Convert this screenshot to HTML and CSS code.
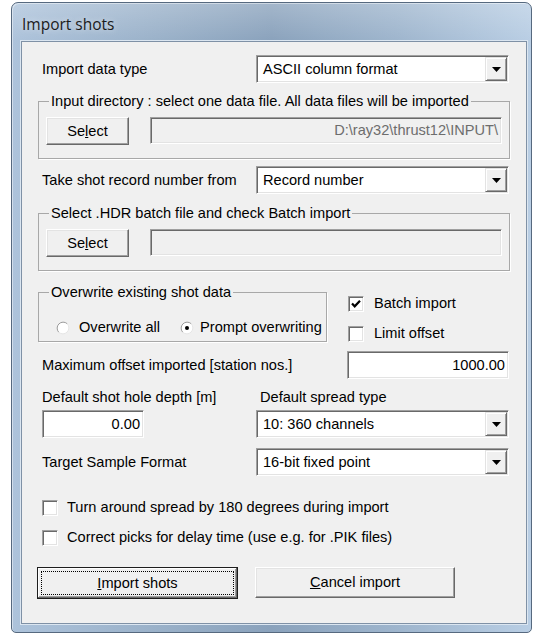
FILE: index.html
```html
<!DOCTYPE html>
<html lang="en">
<head>
<meta charset="utf-8">
<title>Import shots</title>
<link rel="stylesheet" href="styles.css">
</head>
<body>
<div class="window">
  <div class="titlebar"><span class="title">Import shots</span></div>
  <div class="client">

    <div class="row combo-row">
      <span class="lbl">Import data type</span>
      <div class="combo"><span class="combo-text">ASCII column format</span><span class="drop"><svg width="9" height="5" viewBox="0 0 9 5"><path d="M0 0H9L4.5 5Z" fill="#000"/></svg></span></div>
    </div>

    <fieldset class="group g1">
      <legend>Input directory : select one data file. All data files will be imported</legend>
      <div class="pick">
        <button class="btn select-btn">Se<u>l</u>ect</button>
        <div class="field disabled">D:\ray32\thrust12\INPUT\</div>
      </div>
    </fieldset>

    <div class="row combo-row take-row">
      <span class="lbl">Take shot record number from</span>
      <div class="combo"><span class="combo-text">Record number</span><span class="drop"><svg width="9" height="5" viewBox="0 0 9 5"><path d="M0 0H9L4.5 5Z" fill="#000"/></svg></span></div>
    </div>

    <fieldset class="group g2">
      <legend>Select .HDR batch file and check Batch import</legend>
      <div class="pick">
        <button class="btn select-btn">Se<u>l</u>ect</button>
        <div class="field disabled"></div>
      </div>
    </fieldset>

    <div class="overwrite-section">
      <fieldset class="group g3">
        <legend>Overwrite existing shot data</legend>
        <div class="radios">
          <label class="radio"><svg class="radio-dot" width="14" height="14" viewBox="0 0 14 14"><circle cx="7" cy="7" r="6" fill="#fff"/><path d="M2.76 11.24A6 6 0 0 1 11.24 2.76" fill="none" stroke="#9a9a9a" stroke-width="1"/><path d="M11.24 2.76A6 6 0 0 1 2.76 11.24" fill="none" stroke="#e6e6e6" stroke-width="1"/></svg><span>Overwrite all</span></label>
          <label class="radio second"><svg class="radio-dot" width="14" height="14" viewBox="0 0 14 14"><circle cx="7" cy="7" r="6" fill="#fff"/><path d="M2.76 11.24A6 6 0 0 1 11.24 2.76" fill="none" stroke="#9a9a9a" stroke-width="1"/><path d="M11.24 2.76A6 6 0 0 1 2.76 11.24" fill="none" stroke="#e6e6e6" stroke-width="1"/><circle cx="7" cy="7" r="2" fill="#000"/></svg><span>Prompt overwriting</span></label>
        </div>
      </fieldset>
      <div class="side-checks">
        <label class="check"><span class="box"><svg width="12" height="12" viewBox="0 0 12 12"><path d="M2 5.5L4.7 8.3L10 2.8" fill="none" stroke="#000" stroke-width="2.2"/></svg></span><span>Batch import</span></label>
        <label class="check second"><span class="box"></span><span>Limit offset</span></label>
      </div>
    </div>

    <div class="row max-row">
      <span class="lbl">Maximum offset imported [station nos.]</span>
      <div class="field value offset-field">1000.00</div>
    </div>

    <div class="pair labels-pair">
      <span class="lbl">Default shot hole depth [m]</span>
      <span class="lbl">Default spread type</span>
    </div>
    <div class="pair inputs-pair">
      <div class="field value depth-field">0.00</div>
      <div class="combo"><span class="combo-text">10: 360 channels</span><span class="drop"><svg width="9" height="5" viewBox="0 0 9 5"><path d="M0 0H9L4.5 5Z" fill="#000"/></svg></span></div>
    </div>

    <div class="row combo-row target-row">
      <span class="lbl">Target Sample Format</span>
      <div class="combo"><span class="combo-text">16-bit fixed point</span><span class="drop"><svg width="9" height="5" viewBox="0 0 9 5"><path d="M0 0H9L4.5 5Z" fill="#000"/></svg></span></div>
    </div>

    <label class="check wide first-wide"><span class="box"></span><span>Turn around spread by 180 degrees during import</span></label>
    <label class="check wide"><span class="box"></span><span>Correct picks for delay time (use e.g. for .PIK files)</span></label>

    <div class="actions">
      <button class="btn action default"><span class="focus"><u>I</u>mport shots</span></button>
      <button class="btn action"><u>C</u>ancel import</button>
    </div>

  </div>
</div>
</body>
</html>
```
FILE: styles.css
```css
* { box-sizing: border-box; }

html, body {
  margin: 0;
  padding: 0;
  background: #fff;
}

body {
  font-family: "Liberation Sans", Arial, sans-serif;
  font-size: 14.6px;
  line-height: 17px;
  color: #000;
}

/* Aero window frame */
.window {
  margin: 2px 0 0 11px;
  width: 521px;
  height: 631px;
  border: 1px solid #56697f;
  border-radius: 7px 7px 5px 5px;
  background:
    linear-gradient(180deg, rgba(255,255,255,0.22) 0, rgba(255,255,255,0) 38px),
    linear-gradient(90deg, #adc3db 0%, #9ab1c9 28%, #8aa2bc 50%, #9eb5cd 74%, #b9cee4 100%);
  padding: 0 4px 8px 9px;
  display: flex;
  flex-direction: column;
  box-shadow: inset 1px 1px 0 rgba(255,255,255,0.45);
}

.titlebar {
  height: 38px;
  display: flex;
  align-items: center;
  padding: 5px 0 0 1px;
}

.title {
  font-family: "Open Sans", "Noto Sans", sans-serif;
  font-size: 15.5px;
  color: #1b1b1b;
  text-shadow: 0 0 6px rgba(255,255,255,0.6);
}

.client {
  flex: 1;
  background: #f0f0f0;
  border: 1px solid #7f91a6;
  box-shadow: 0 0 0 1px #dbe6f1;
  padding: 13px 16px 0 16px;
  display: flex;
  flex-direction: column;
}

/* generic rows */
.row {
  display: flex;
  align-items: center;
}

.lbl {
  padding-left: 4px;
}

/* classic sunken combobox */
.combo {
  display: flex;
  align-items: stretch;
  margin-left: auto;
  margin-right: 1px;
  width: 253px;
  height: 28px;
  background: #fff;
  border: 1px solid;
  border-color: #a0a0a0 #fff #fff #a0a0a0;
  box-shadow: inset 1px 1px 0 #696969, inset -1px -1px 0 #e3e3e3;
  padding: 1px;
}

.combo-text {
  flex: 1;
  display: flex;
  align-items: center;
  padding-left: 5px;
}

.drop {
  width: 22px;
  display: flex;
  align-items: center;
  justify-content: center;
  background: #f0f0f0;
  border: 1px solid;
  border-color: #e3e3e3 #696969 #696969 #e3e3e3;
  box-shadow: inset 1px 1px 0 #fff, inset -1px -1px 0 #a0a0a0;
}

/* etched group boxes */
.group {
  margin: 0;
  min-width: 0;
  border: 1px solid #a8a8a8;
  box-shadow: 1px 1px 0 #fff;
}

.group legend {
  padding: 0 2px;
  line-height: 17px;
}

.g1, .g2 {
  padding: 7px 7px 13px 7px;
}

.g1 legend, .g2 legend {
  margin-left: 3px;
}

.g1 { margin-top: 10px; }
.g2 { margin-top: 11px; }

.pick {
  display: flex;
  align-items: flex-start;
  gap: 21px;
}

/* classic raised push button */
.btn {
  font: inherit;
  color: #000;
  background: #f0f0f0;
  border: 1px solid;
  border-color: #fff #696969 #696969 #fff;
  box-shadow: inset -1px -1px 0 #a0a0a0, inset 1px 1px 0 #e3e3e3;
  padding: 0;
  margin: 0;
}

.select-btn {
  width: 83px;
  height: 28px;
}

/* sunken edit field */
.field {
  height: 27px;
  border: 1px solid;
  border-color: #a0a0a0 #fff #fff #a0a0a0;
  box-shadow: inset 1px 1px 0 #696969, inset -1px -1px 0 #e3e3e3;
  display: flex;
  align-items: center;
  justify-content: flex-end;
  padding: 0 3px;
  background: #fff;
}

.field.disabled {
  flex: 1;
  background: #f0f0f0;
  color: #6d6d6d;
}

.take-row { margin-top: 7px; }

/* overwrite group and side checkboxes */
.overwrite-section {
  display: flex;
  margin-top: 13px;
}

.g3 {
  width: 289px;
  padding: 18px 0 5px 10px;
}

.radios {
  display: flex;
  align-items: center;
  margin-left: 7px;
}

.radio {
  display: flex;
  align-items: center;
  gap: 9px;
}

.radio.second {
  margin-left: 20px;
  gap: 6px;
}

.radio-dot { display: block; }

.side-checks {
  display: flex;
  flex-direction: column;
  margin-left: 21px;
  padding-top: 11px;
}

.check {
  display: flex;
  align-items: center;
  gap: 10px;
  height: 17px;
}

.side-checks .check.second { margin-top: 13px; }

.box {
  width: 16px;
  height: 16px;
  background: #fff;
  border: 1px solid;
  border-color: #a0a0a0 #fff #fff #a0a0a0;
  box-shadow: inset 1px 1px 0 #696969, inset -1px -1px 0 #e3e3e3;
  display: flex;
  align-items: center;
  justify-content: center;
}

.max-row { margin-top: 9px; }

.offset-field {
  margin-left: auto;
  margin-right: 1px;
  width: 162px;
  height: 28px;
}

.pair {
  display: grid;
  grid-template-columns: 218px 1fr;
  align-items: center;
}

.labels-pair { margin-top: 10px; }

.inputs-pair { margin-top: 4px; }

.depth-field {
  margin-left: 4px;
  width: 102px;
  height: 28px;
}

.inputs-pair .combo {
  margin-left: 0;
}

.target-row { margin-top: 10px; }

.check.wide {
  margin-left: 4px;
  gap: 9px;
  margin-top: 13px;
}

.check.wide.first-wide { margin-top: 23px; }

.actions {
  display: flex;
  align-items: flex-start;
  gap: 17px;
  margin-top: 21px;
}

.action {
  width: 200px;
  height: 31px;
}

.action.default {
  height: 32px;
  margin-left: -1px;
  width: 201px;
  border-color: #1e1e1e;
  box-shadow: inset -1px -1px 0 #696969, inset 1px 1px 0 #fff, inset -2px -2px 0 #a0a0a0;
  padding: 3px;
}

.focus {
  display: flex;
  align-items: center;
  justify-content: center;
  height: 100%;
  outline: 1px dotted #000;
  outline-offset: -1px;
}
```
